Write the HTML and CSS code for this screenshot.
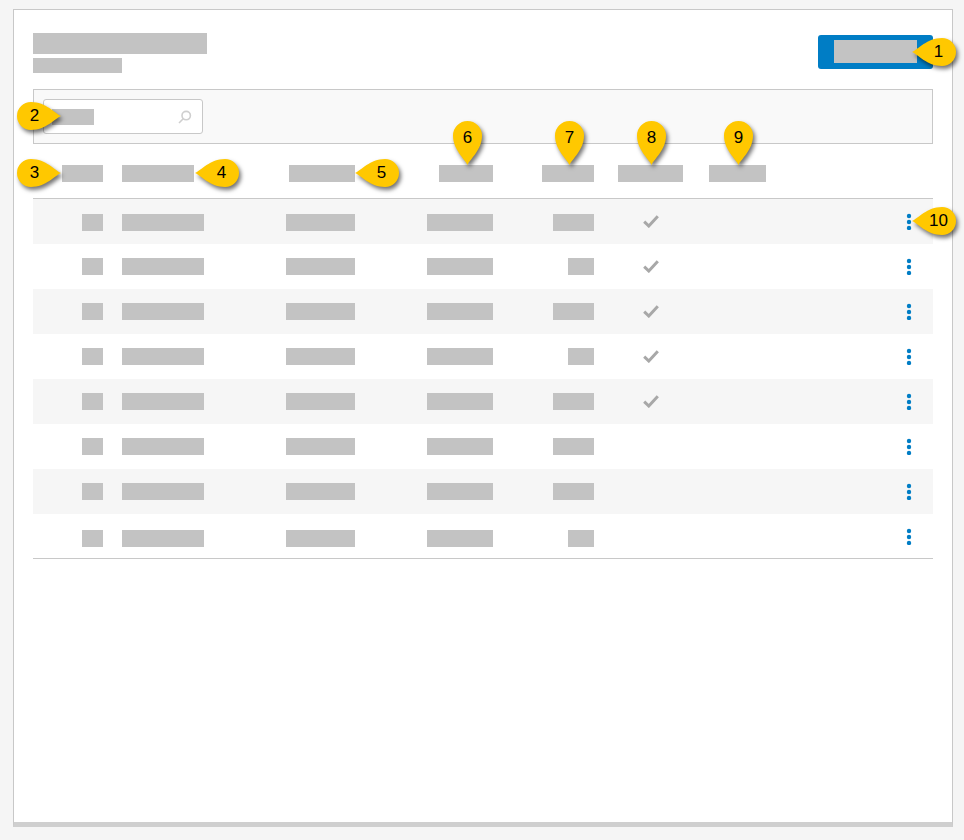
FILE: index.html
```html
<!DOCTYPE html>
<html lang="en">
<head>
<meta charset="utf-8">
<title>List</title>
<link rel="stylesheet" href="styles.css">
</head>
<body>
<svg class="defs" aria-hidden="true">
  <symbol id="pin-down" viewBox="0 0 29 44"><path d="M14.5 44C12 38 0 29 0 14.5A14.5 14.5 0 0 1 29 14.5C29 29 17 38 14.5 44Z"/></symbol>
  <symbol id="pin-left" viewBox="0 0 44 28"><path d="M0 14C6 11.5 15 0 30 0A14 14 0 0 1 30 28C15 28 6 16.5 0 14Z"/></symbol>
  <symbol id="pin-right" viewBox="0 0 44 28"><path d="M44 14C38 11.5 29 0 14 0A14 14 0 0 0 14 28C29 28 38 16.5 44 14Z"/></symbol>
  <symbol id="check" viewBox="0 0 16 13"><path d="M1.2 6.6L5.8 11L14.8 1.2" fill="none" stroke="#a8a8a8" stroke-width="3"/></symbol>
  <symbol id="dots" viewBox="0 0 6 17"><circle cx="3" cy="3" r="2.2"/><circle cx="3" cy="9" r="2.2"/><circle cx="3" cy="15" r="2.2"/></symbol>
</svg>
<main class="card">
  <header class="top">
    <div class="titles">
      <span class="bar title"></span>
      <span class="bar subtitle"></span>
    </div>
    <button class="primary" type="button"><span class="bar primary-label"></span></button>
  </header>

  <section class="filter">
    <div class="search">
      <span class="bar placeholder"></span>
      <svg class="search-icon" viewBox="0 0 14 14"><circle cx="8.2" cy="5.6" r="4.2"/><path d="M5.2 8.8L1 13"/></svg>
    </div>
  </section>

  <div class="grid head">
    <span class="bar h1"></span>
    <span class="bar h2"></span>
    <span class="bar h3"></span>
    <span class="bar h4"></span>
    <span class="bar h5"></span>
    <span class="bar h6"></span>
    <span class="bar h7"></span>
  </div>

  <div class="grid row odd first">
    <span class="bar c1"></span><span class="bar c2"></span><span class="bar c3"></span><span class="bar c4"></span><span class="bar c5"></span>
    <svg class="check"><use href="#check"/></svg><span></span><svg class="dots"><use href="#dots"/></svg>
  </div>
  <div class="grid row">
    <span class="bar c1"></span><span class="bar c2"></span><span class="bar c3"></span><span class="bar c4"></span><span class="bar c5s"></span>
    <svg class="check"><use href="#check"/></svg><span></span><svg class="dots"><use href="#dots"/></svg>
  </div>
  <div class="grid row odd">
    <span class="bar c1"></span><span class="bar c2"></span><span class="bar c3"></span><span class="bar c4"></span><span class="bar c5"></span>
    <svg class="check"><use href="#check"/></svg><span></span><svg class="dots"><use href="#dots"/></svg>
  </div>
  <div class="grid row">
    <span class="bar c1"></span><span class="bar c2"></span><span class="bar c3"></span><span class="bar c4"></span><span class="bar c5s"></span>
    <svg class="check"><use href="#check"/></svg><span></span><svg class="dots"><use href="#dots"/></svg>
  </div>
  <div class="grid row odd">
    <span class="bar c1"></span><span class="bar c2"></span><span class="bar c3"></span><span class="bar c4"></span><span class="bar c5"></span>
    <svg class="check"><use href="#check"/></svg><span></span><svg class="dots"><use href="#dots"/></svg>
  </div>
  <div class="grid row">
    <span class="bar c1"></span><span class="bar c2"></span><span class="bar c3"></span><span class="bar c4"></span><span class="bar c5"></span>
    <span></span><span></span><svg class="dots"><use href="#dots"/></svg>
  </div>
  <div class="grid row odd">
    <span class="bar c1"></span><span class="bar c2"></span><span class="bar c3"></span><span class="bar c4"></span><span class="bar c5"></span>
    <span></span><span></span><svg class="dots"><use href="#dots"/></svg>
  </div>
  <div class="grid row last">
    <span class="bar c1"></span><span class="bar c2"></span><span class="bar c3"></span><span class="bar c4"></span><span class="bar c5s"></span>
    <span></span><span></span><svg class="dots"><use href="#dots"/></svg>
  </div>

  <div class="pin left m1"><svg><use href="#pin-left"/></svg><span>1</span></div>
  <div class="pin right m2"><svg><use href="#pin-right"/></svg><span>2</span></div>
  <div class="pin right m3"><svg><use href="#pin-right"/></svg><span>3</span></div>
  <div class="pin left m4"><svg><use href="#pin-left"/></svg><span>4</span></div>
  <div class="pin left m5"><svg><use href="#pin-left"/></svg><span>5</span></div>
  <div class="pin down m6"><svg><use href="#pin-down"/></svg><span>6</span></div>
  <div class="pin down m7"><svg><use href="#pin-down"/></svg><span>7</span></div>
  <div class="pin down m8"><svg><use href="#pin-down"/></svg><span>8</span></div>
  <div class="pin down m9"><svg><use href="#pin-down"/></svg><span>9</span></div>
  <div class="pin left m10"><svg><use href="#pin-left"/></svg><span>10</span></div>
</main>
</body>
</html>
```
FILE: styles.css
```css
* { box-sizing: border-box; }
html, body { margin: 0; }
body {
  background: #f5f5f5;
  padding: 9px 11px 13px 13px;
  font-family: "Liberation Sans", Arial, sans-serif;
  overflow: hidden;
}
.defs { position: absolute; width: 0; height: 0; }

.card {
  position: relative;
  width: 940px;
  height: 818px;
  background: #fff;
  border: 1px solid #c8c8c8;
  border-bottom: 5px solid #cfcfcf;
  padding: 23px 19px 0;
}
.bar { display: block; background: #c3c3c3; height: 17px; }

.top { display: flex; justify-content: space-between; align-items: flex-start; height: 40px; }
.titles { display: flex; flex-direction: column; gap: 4px; }
.title { width: 174px; height: 21px; }
.subtitle { width: 89px; height: 15px; }
.primary {
  margin: 2px 0 0;
  width: 115px;
  height: 34px;
  padding: 5px 16px 6px;
  border: 0;
  border-radius: 3px;
  background: #007dc5;
}
.primary-label { width: 83px; height: 23px; }

.filter {
  margin-top: 16px;
  height: 55px;
  padding: 9px;
  background: #f9f9f9;
  border: 1px solid #c8c8c8;
}
.search {
  display: flex;
  justify-content: space-between;
  align-items: center;
  width: 160px;
  height: 35px;
  padding: 0 10px 0 8px;
  background: #fff;
  border: 1px solid #c8c8c8;
  border-radius: 3px;
}
.placeholder { width: 42px; height: 16px; }
.search-icon { width: 14px; height: 14px; fill: none; stroke: #cfcfcf; stroke-width: 1.6; }

.grid {
  display: grid;
  grid-template-columns: 70px 167px 85px 138px 101px 113px 182px 44px;
  align-items: center;
}
.grid > :nth-child(1), .grid > :nth-child(3), .grid > :nth-child(4), .grid > :nth-child(5) { justify-self: end; }
.grid > :nth-child(2) { margin-left: 19px; }
.grid > :nth-child(6) { justify-self: center; }
.head > :nth-child(7) { margin-left: 2px; }
.head {
  margin-top: 21px;
  height: 34px;
  padding-bottom: 16px;
  border-bottom: 1px solid #c8c8c8;
}
.h1 { width: 41px; }
.h2 { width: 72px; }
.h3 { width: 66px; }
.h4 { width: 54px; }
.h5 { width: 52px; }
.h6 { width: 65px; }
.h7 { width: 57px; }

.row { height: 45px; }
.odd { background: #f6f6f6; }
.first .bar { margin-top: 2px; }
.last { border-bottom: 1px solid #c8c8c8; }
.last .bar { margin-top: 5px; }
.last .dots { margin-top: 1px; }
.c1 { width: 21px; }
.c2 { width: 82px; }
.c3 { width: 69px; }
.c4 { width: 66px; }
.c5 { width: 41px; }
.c5s { width: 26px; }
.check { width: 16px; height: 13px; }
.dots { width: 6px; height: 17px; fill: #007dc5; justify-self: center; margin-right: 4px; }

.pin { position: absolute; }
.pin svg {
  display: block;
  width: 100%;
  height: 100%;
  fill: #ffc800;
  overflow: visible;
  filter: drop-shadow(2px 3px 2px rgba(0, 0, 0, .55));
}
.pin span {
  position: absolute;
  font-size: 17px;
  line-height: 16px;
  color: #000;
  text-align: center;
}
.left, .right { width: 44px; height: 28px; }
.down { width: 29px; height: 44px; }
.left span { right: 7px; top: 6px; width: 21px; }
.right span { left: 7px; top: 6px; width: 21px; }
.down span { left: 0; top: 9px; width: 100%; }

/* Card padding box starts at page (14, 10). */
.m1 { left: 898px; top: 28px; }
.m2 { left: 3px; top: 92px; }
.m3 { left: 3px; top: 149px; }
.m4 { left: 181px; top: 149px; }
.m5 { left: 341px; top: 149px; }
.m6 { left: 439px; top: 111px; }
.m7 { left: 541px; top: 111px; }
.m8 { left: 623px; top: 111px; }
.m9 { left: 710px; top: 111px; }
.m10 { left: 898px; top: 197px; }
```
